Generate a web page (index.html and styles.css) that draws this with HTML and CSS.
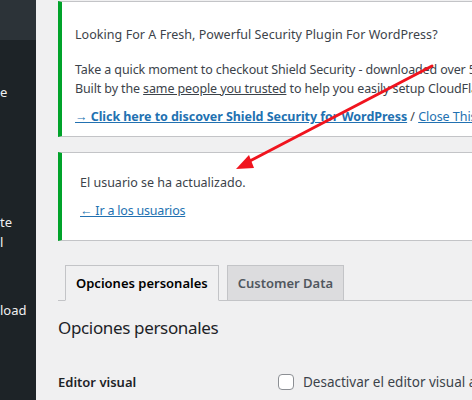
FILE: index.html
```html
<!DOCTYPE html>
<html>
<head>
<meta charset="utf-8">
<link rel="stylesheet" href="styles.css">
</head>
<body>
<div class="page">
  <aside class="sidebar">
    <div class="sb-top"></div>
    <div class="sb-menu">
      <div class="sb-item sb-a">e</div>
      <div class="sb-item sb-b">te<br>l</div>
      <div class="sb-item sb-c">load</div>
    </div>
  </aside>
  <main class="main">
    <div class="notice notice-1">
      <p class="n-title">Looking For A Fresh, Powerful Security Plugin For WordPress?</p>
      <p class="n-body">Take a quick moment to checkout Shield Security - downloaded over 50,000 times.<br>Built by the <u>same people you trusted</u> to help you easily setup CloudFlare.</p>
      <p class="n-links"><a class="strong-link" href="#">→ Click here to discover Shield Security for WordPress</a> / <a class="plain-link" href="#">Close This Notice</a></p>
    </div>
    <div class="notice notice-2">
      <p class="n-msg">El usuario se ha actualizado.</p>
      <p class="n-back"><a href="#">← Ir a los usuarios</a></p>
    </div>
    <nav class="tabs">
      <span class="tab active">Opciones personales</span>
      <span class="tab">Customer Data</span>
    </nav>
    <h2 class="heading">Opciones personales</h2>
    <div class="row">
      <span class="label">Editor visual</span>
      <label class="check"><span class="box"></span>Desactivar el editor visual al escribir</label>
    </div>
  </main>
  <svg class="arrow" width="472" height="400" viewBox="0 0 472 400">
    <line x1="432" y1="66" x2="246" y2="163" stroke="#f0141e" stroke-width="3" stroke-linecap="round"/>
    <polygon points="236,169 249,155 254,168" fill="#f0141e"/>
  </svg>
</div>
</body>
</html>
```
FILE: styles.css
```css
html, body {
  margin: 0;
  padding: 0;
  background: #f0f0f1;
  overflow: hidden;
  width: 472px;
  height: 400px;
}
.page {
  position: relative;
  display: flex;
  width: 472px;
  height: 400px;
  font-family: "Noto Sans", "Open Sans", sans-serif;
  color: #1d2327;
}
.sidebar {
  width: 36px;
  flex: none;
  background: #1d2327;
  display: flex;
  flex-direction: column;
  color: #f0f0f1;
  font-size: 13px;
  overflow: hidden;
}
.sb-top {
  height: 40px;
  background: #2c3338;
}
.sb-item {
  line-height: 20px;
  white-space: nowrap;
}
.sb-a { margin-top: 42px; }
.sb-b { margin-top: 110px; }
.sb-c { margin-top: 48px; }
.main {
  flex: none;
  width: 700px;
  padding-left: 22px;
  padding-top: 1px;
}
.notice {
  background: #fff;
  border: 1px solid #c3c4c7;
  border-left: 4px solid #00a32a;
  box-sizing: border-box;
}
.notice p { margin: 0; }
.notice-1 {
  height: 136px;
  padding: 23px 12px 0 13px;
  font-size: 12.5px;
  color: #3c434a;
}
.n-title { line-height: 20px; letter-spacing: 0.05px; }
.n-body { line-height: 19px; margin-top: 15px !important; letter-spacing: -0.12px; }
.n-links { line-height: 20px; margin-top: 9px !important; letter-spacing: -0.05px; }
.strong-link { color: #2271b1; font-weight: 700; }
.plain-link { color: #2271b1; }
.notice-2 {
  margin-top: 15px;
  height: 89px;
  padding: 20px 18px 0 18px;
  font-size: 12.5px;
  color: #3c434a;
}
.n-msg { line-height: 20px; }
.n-back { line-height: 20px; margin-top: 8px !important; letter-spacing: -0.2px; }
.n-back a { color: #2271b1; }
.tabs {
  margin-top: 24px;
  border-bottom: 1px solid #c3c4c7;
  padding-left: 7px;
  display: flex;
  gap: 8px;
  height: 35px;
  align-items: flex-end;
}
.tab {
  box-sizing: border-box;
  height: 36px;
  margin-bottom: -1px;
  border: 1px solid #c3c4c7;
  background: #dcdcde;
  color: #50575e;
  font-size: 13px;
  font-weight: 600;
  line-height: 34px;
  padding: 0 10px;
}
.tab.active {
  background: #f0f0f1;
  border-bottom-color: #f0f0f1;
  color: #000;
}
.heading {
  margin: 13px 0 0 0;
  font-size: 17px;
  font-weight: 400;
  line-height: 28px;
  letter-spacing: -0.35px;
  color: #1d2327;
}
.row {
  display: flex;
  align-items: center;
  margin-top: 31px;
  font-size: 13px;
}
.label {
  width: 220px;
  font-weight: 600;
  color: #1d2327;
}
.check {
  display: flex;
  align-items: center;
  gap: 9px;
  color: #3c434a;
  white-space: nowrap;
  font-size: 13.5px;
}
.box {
  width: 16px;
  height: 16px;
  box-sizing: border-box;
  border: 1px solid #8c8f94;
  border-radius: 4px;
  background: #fff;
}
.arrow {
  position: absolute;
  left: 0;
  top: 0;
  pointer-events: none;
}
```
